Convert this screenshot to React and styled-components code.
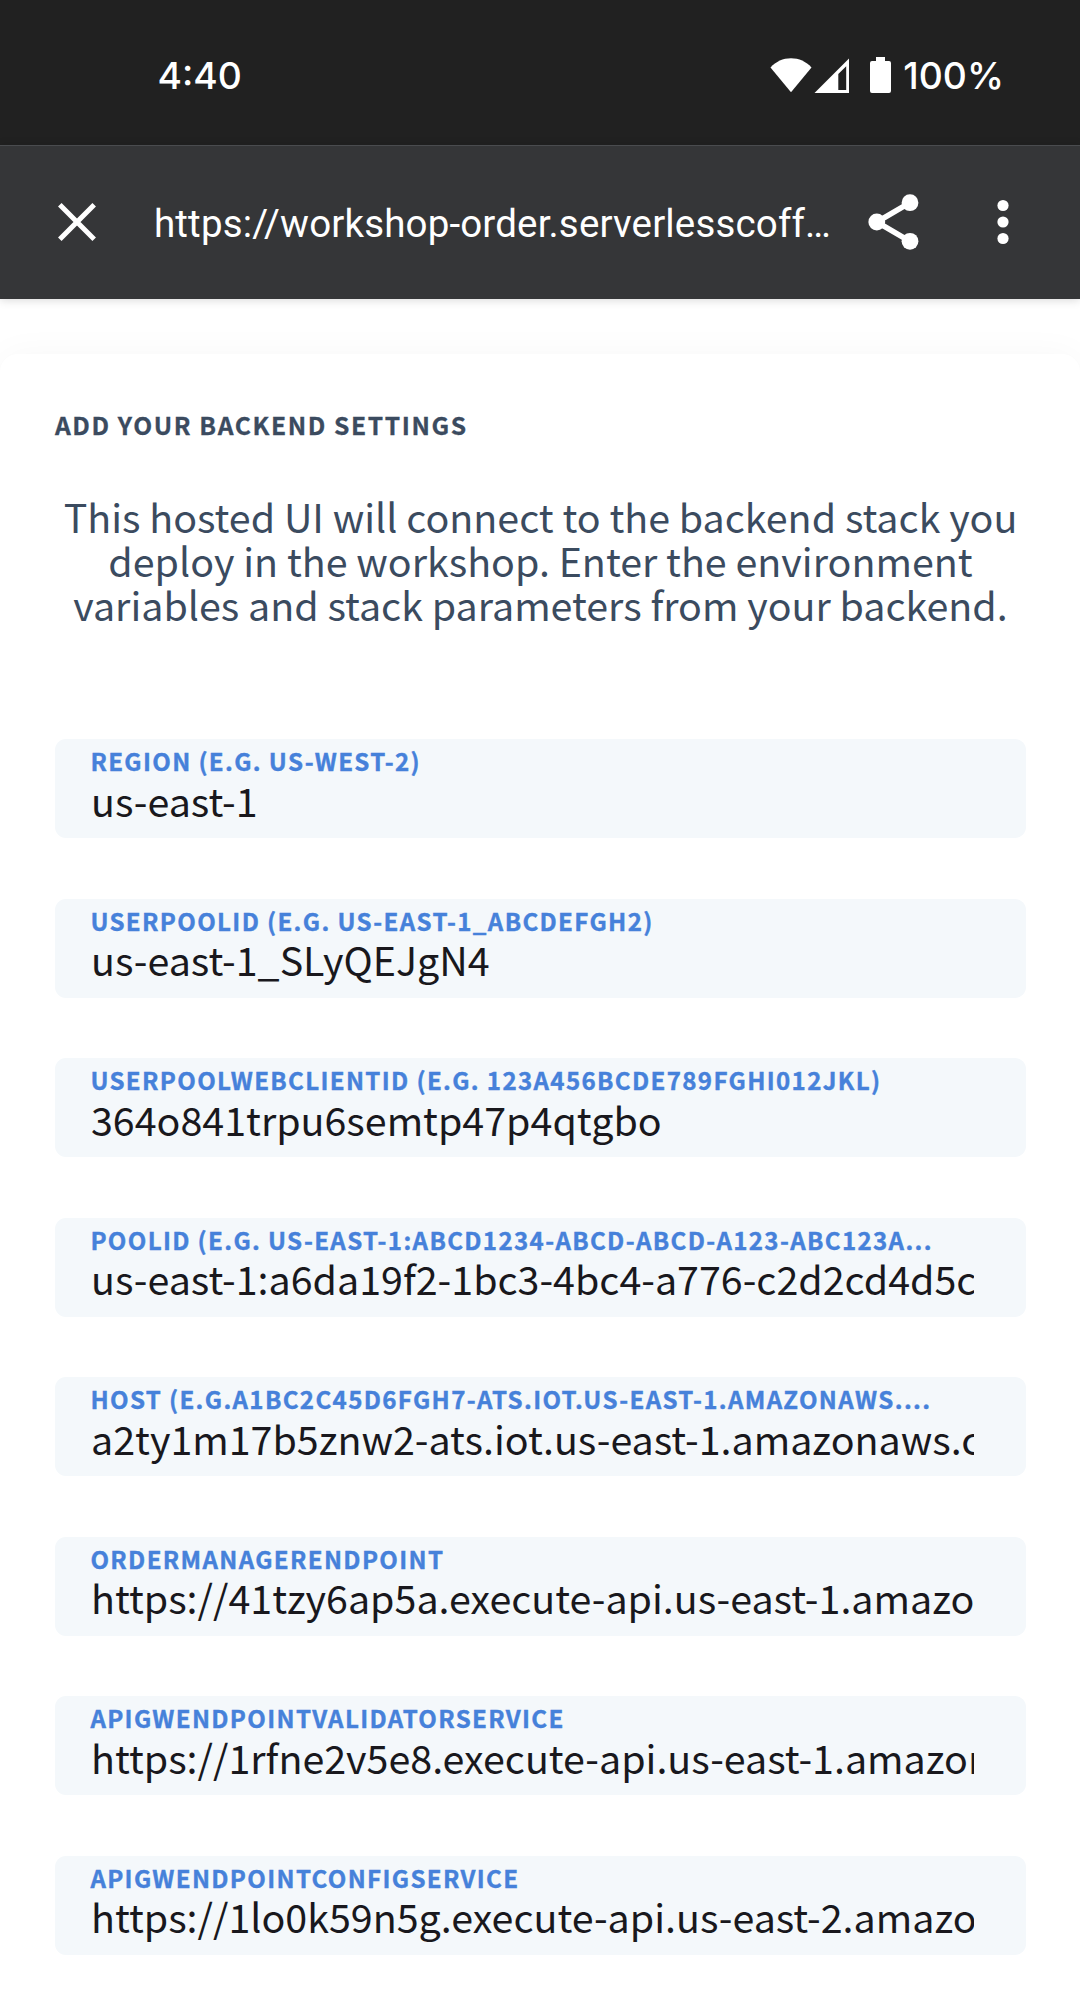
import React from "react";
import styled, { createGlobalStyle } from "styled-components";

const GlobalStyle = createGlobalStyle`
  * { box-sizing: border-box; }
  html, body { margin: 0; padding: 0; background: #fff; overflow: hidden; }
`;

const Screen = styled.div`
  width: 1080px;
  height: 2000px;
  overflow: hidden;
  display: flex;
  flex-direction: column;
  background: #fff;
  font-family: "Noto Sans CJK SC", "Noto Sans", sans-serif;
`;

const StatusBar = styled.header`
  flex: none;
  height: 145px;
  padding: 6px 76px 0 157.5px;
  display: flex;
  align-items: center;
  justify-content: space-between;
  background: #212121;
  color: #fff;
`;

const StatusText = styled.span`
  font: 500 37.3px/46px Inter, sans-serif;
  font-feature-settings: "case";
  white-space: nowrap;
`;

const StatusIcons = styled.div`
  display: flex;
  align-items: center;
`;

const StatusGlyph = styled.svg`
  display: block;
  flex: none;
  position: relative;
  top: -1px;
  fill: #fff;
  margin-right: ${(p) => p.$gap}px;
`;

const Toolbar = styled.nav`
  flex: none;
  position: relative;
  height: 154px;
  padding: 0 71px 2px 57px;
  border-top: 1px solid #4a4c4f;
  display: flex;
  align-items: center;
  background: #353638;
  box-shadow: 0 1px 9px rgba(0, 0, 0, 0.16);
`;

const ToolButton = styled.button`
  flex: none;
  display: flex;
  padding: 0;
  border: 0;
  margin-left: ${(p) => p.$offset || 0}px;
  background: none;
  color: #fff;
`;

const Address = styled.div`
  width: 737px;
  padding: 5px 0 0 57px;
  font: 400 38.5px/48px Roboto, sans-serif;
  letter-spacing: 0.16px;
  color: #fff;
  white-space: nowrap;
`;

const Card = styled.main`
  flex: 1;
  margin-top: 55px;
  padding: 55px 54px 0 55px;
  border-radius: 18px 18px 0 0;
  background: #fff;
  box-shadow: 0 0 36px rgba(0, 0, 0, 0.035);
`;

const Heading = styled.h1`
  margin: 0;
  font-size: 24.6px;
  line-height: 30px;
  font-weight: 700;
  letter-spacing: 1.6px;
  -webkit-text-stroke: 0.3px currentColor;
  color: #3b4b5f;
`;

const Intro = styled.p`
  margin: 55px -10px 0;
  text-align: center;
  font-size: 39.4px;
  line-height: 44px;
  color: #3b4b5f;
`;

const Form = styled.form`
  margin-top: 113.1px;
  display: flex;
  flex-direction: column;
  gap: 60.55px;
`;

const FieldBox = styled.label`
  height: 99px;
  padding: 8px 52px 0 36px;
  border-radius: 11px;
  background: #f4f8fb;
  display: flex;
  flex-direction: column;
`;

const FieldLabel = styled.span`
  margin-left: -0.6px;
  font-size: 24.1px;
  line-height: 28px;
  font-weight: 700;
  letter-spacing: 1.35px;
  -webkit-text-stroke: 0.4px currentColor;
  color: #4681da;
  white-space: nowrap;
`;

const FieldValue = styled.span`
  margin-top: 0.5px;
  overflow-x: clip;
  overflow-y: visible;
  font-size: 39.4px;
  line-height: 48px;
  color: #19181d;
  white-space: nowrap;
`;

const FIELDS = [
  ["REGION (E.G. US-WEST-2)", "us-east-1"],
  ["USERPOOLID (E.G. US-EAST-1_ABCDEFGH2)", "us-east-1_SLyQEJgN4"],
  ["USERPOOLWEBCLIENTID (E.G. 123A456BCDE789FGHI012JKL)", "364o841trpu6semtp47p4qtgbo"],
  ["POOLID (E.G. US-EAST-1:ABCD1234-ABCD-ABCD-A123-ABC123A...", "us-east-1:a6da19f2-1bc3-4bc4-a776-c2d2cd4d5c"],
  ["HOST (E.G.A1BC2C45D6FGH7-ATS.IOT.US-EAST-1.AMAZONAWS....", "a2ty1m17b5znw2-ats.iot.us-east-1.amazonaws.c"],
  ["ORDERMANAGERENDPOINT", "https://41tzy6ap5a.execute-api.us-east-1.amazo"],
  ["APIGWENDPOINTVALIDATORSERVICE", "https://1rfne2v5e8.execute-api.us-east-1.amazon"],
  ["APIGWENDPOINTCONFIGSERVICE", "https://1lo0k59n5g.execute-api.us-east-2.amazo"],
];

function Field({ label, value }) {
  return (
    <FieldBox>
      <FieldLabel>{label}</FieldLabel>
      <FieldValue>{value}</FieldValue>
    </FieldBox>
  );
}

export default function App() {
  return (
    <Screen lang="en">
      <GlobalStyle />
      <StatusBar>
        <StatusText>4:40</StatusText>
        <StatusIcons>
          <StatusGlyph $gap={2} width="42" height="36" viewBox="0 0 42 36">
            <path d="M0.5 10.5C6 4.5 13 1.3 21 1.3S36 4.5 41.5 10.5L21 35.3Z" />
          </StatusGlyph>
          <StatusGlyph $gap={19.5} width="36" height="36" viewBox="0 0 36 36">
            <path fillRule="evenodd" d="M0.5 36L35 1.5V36ZM24.3 33H32.2V9.2L24.3 17Z" />
          </StatusGlyph>
          <StatusGlyph $gap={12.5} width="21" height="36" viewBox="0 0 21 36">
            <path d="M6 0H15V4H19Q21 4 21 6V34Q21 36 19 36H2Q0 36 0 34V6Q0 4 2 4H6Z" />
          </StatusGlyph>
          <StatusText>100%</StatusText>
        </StatusIcons>
      </StatusBar>
      <Toolbar>
        <ToolButton aria-label="Close">
          <svg width="40" height="40" viewBox="0 0 40 40" stroke="currentColor" strokeWidth="5">
            <path d="M2.8 2.8L37.2 37.2M37.2 2.8L2.8 37.2" />
          </svg>
        </ToolButton>
        <Address>https://workshop-order.serverlesscoff…</Address>
        <ToolButton aria-label="Share" $offset={33.5}>
          <svg width="51" height="58" viewBox="0 0 51 58" fill="currentColor">
            <path d="M42 9.7L8.8 29L42 48.3" fill="none" stroke="currentColor" strokeWidth="5.5" />
            <circle cx="42" cy="9.7" r="8.4" />
            <circle cx="8.8" cy="29" r="8.4" />
            <circle cx="42" cy="48.3" r="8.4" />
          </svg>
        </ToolButton>
        <ToolButton aria-label="More" $offset={78.5}>
          <svg width="12" height="46" viewBox="0 0 12 46" fill="currentColor">
            <circle cx="6" cy="6.5" r="5.6" />
            <circle cx="6" cy="23" r="5.6" />
            <circle cx="6" cy="39.5" r="5.6" />
          </svg>
        </ToolButton>
      </Toolbar>
      <Card>
        <Heading>ADD YOUR BACKEND SETTINGS</Heading>
        <Intro>
          This hosted UI will connect to the backend stack you
          <br />
          deploy in the workshop. Enter the environment
          <br />
          variables and stack parameters from your backend.
        </Intro>
        <Form>
          {FIELDS.map(([label, value]) => (
            <Field key={label} label={label} value={value} />
          ))}
        </Form>
      </Card>
    </Screen>
  );
}
